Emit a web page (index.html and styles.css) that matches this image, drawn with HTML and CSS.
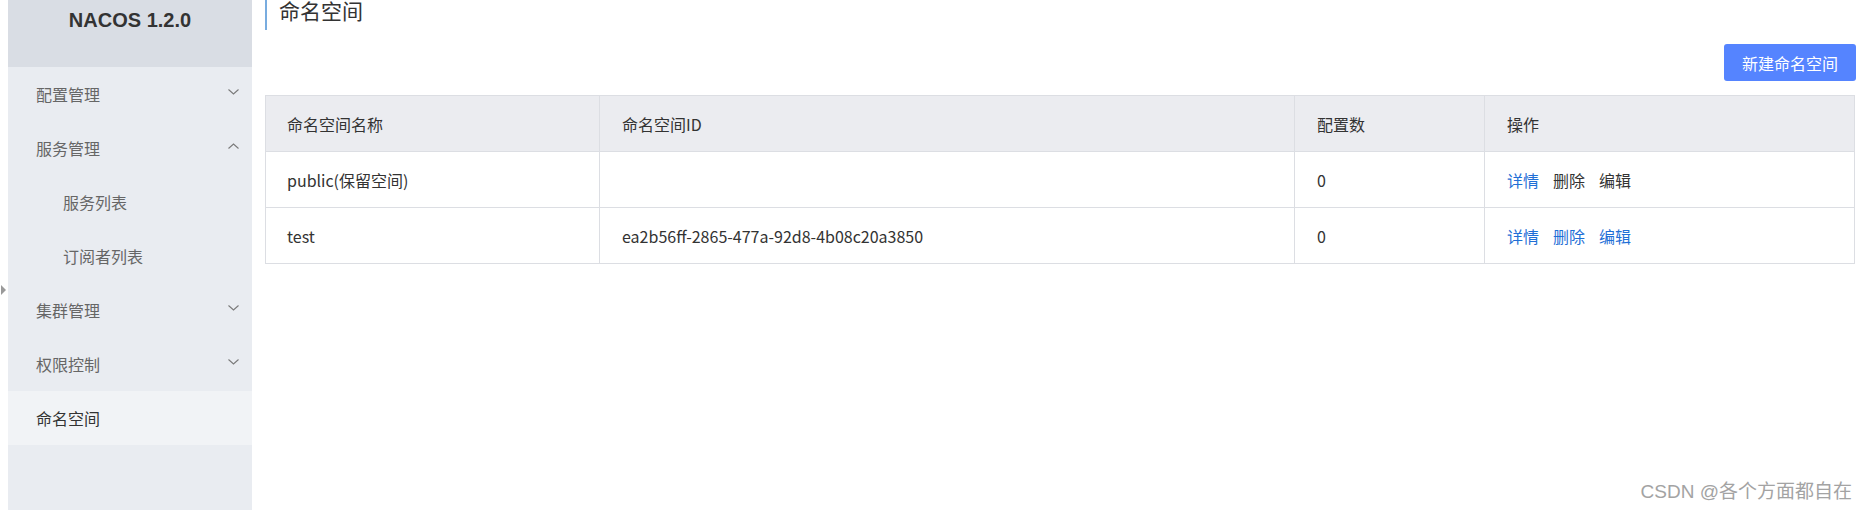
FILE: index.html
```html
<!DOCTYPE html>
<html lang="zh-CN">
<head>
<meta charset="utf-8">
<title>Nacos 命名空间</title>
<link rel="stylesheet" href="styles.css">
</head>
<body>
<div class="toggle"></div>
<div class="layout">
  <aside class="sidebar">
    <div class="brand">NACOS 1.2.0</div>
    <ul class="menu">
      <li class="item"><span>配置管理</span><svg class="chev" width="11" height="6" viewBox="0 0 11 6"><polyline points="0.5,0.5 5.5,5 10.5,0.5"/></svg></li>
      <li class="item"><span>服务管理</span><svg class="chev" width="11" height="6" viewBox="0 0 11 6"><polyline points="0.5,5.5 5.5,1 10.5,5.5"/></svg></li>
      <li class="item sub"><span>服务列表</span></li>
      <li class="item sub"><span>订阅者列表</span></li>
      <li class="item"><span>集群管理</span><svg class="chev" width="11" height="6" viewBox="0 0 11 6"><polyline points="0.5,0.5 5.5,5 10.5,0.5"/></svg></li>
      <li class="item"><span>权限控制</span><svg class="chev" width="11" height="6" viewBox="0 0 11 6"><polyline points="0.5,0.5 5.5,5 10.5,0.5"/></svg></li>
      <li class="item active"><span>命名空间</span></li>
    </ul>
  </aside>
  <main class="main">
    <h1 class="title">命名空间</h1>
    <div class="toolbar"><button class="btn">新建命名空间</button></div>
    <table class="grid">
      <colgroup>
        <col class="c1"><col class="c2"><col class="c3"><col class="c4">
      </colgroup>
      <thead>
        <tr><th class="first">命名空间名称</th><th>命名空间ID</th><th>配置数</th><th>操作</th></tr>
      </thead>
      <tbody>
        <tr>
          <td class="first">public(保留空间)</td><td></td><td>0</td>
          <td><span class="ops"><a class="link">详情</a><a class="plain">删除</a><a class="plain">编辑</a></span></td>
        </tr>
        <tr>
          <td class="first">test</td><td>ea2b56ff-2865-477a-92d8-4b08c20a3850</td><td>0</td>
          <td><span class="ops"><a class="link">详情</a><a class="link">删除</a><a class="link">编辑</a></span></td>
        </tr>
      </tbody>
    </table>
  </main>
</div>
<div class="watermark">CSDN @各个方面都自在</div>
</body>
</html>
```

FILE: styles.css
```css
* { box-sizing: border-box; }
html, body { margin: 0; padding: 0; background: #fff; }
body {
  font-family: "Noto Sans CJK SC", "Liberation Sans", sans-serif;
  color: #333;
  height: 510px;
  overflow: hidden;
  position: relative;
}
.layout {
  display: flex;
  height: 510px;
  padding-left: 8px;
}
.sidebar {
  width: 244px;
  flex: none;
  background: #e9ecf1;
  height: 100%;
}
.brand {
  height: 67px;
  background: #d9dde4;
  text-align: center;
  font-family: "Liberation Sans", Arial, sans-serif;
  font-weight: bold;
  font-size: 20px;
  line-height: 40px;
  color: #333;
}
.menu { list-style: none; margin: 0; padding: 0; }
.item {
  height: 54px;
  display: flex;
  align-items: center;
  justify-content: space-between;
  padding: 0 13px 0 28px;
  font-size: 16px;
  color: #666;
}
.item.sub { padding-left: 55px; }
.item.active { background: #f1f3f6; color: #333; }
.chev { margin-top: -4px; }
.chev polyline { fill: none; stroke: #7a7a7a; stroke-width: 1.1; }
.main {
  flex: 1;
  padding: 0 12px 0 13px;
}
.title {
  margin: 0;
  height: 30px;
  border-left: 2px solid #78acdf;
  padding-left: 12px;
  font-size: 21px;
  font-weight: normal;
  line-height: 20px;
  color: #333;
}
.toolbar {
  display: flex;
  justify-content: flex-end;
  margin-top: 14px;
}
.btn {
  width: 132px;
  height: 37px;
  margin-right: -1px;
  border: none;
  border-radius: 3px;
  background: #5584ff;
  color: #fff;
  font-family: inherit;
  font-size: 16px;
  padding: 0;
}
.grid {
  margin-top: 14px;
  width: 100%;
  border-collapse: collapse;
  table-layout: fixed;
  font-size: 16px;
  border: 1px solid #dcdee3;
}
.c1 { width: 334px; }
.c2 { width: 695px; }
.c3 { width: 190px; }
.grid th, .grid td {
  height: 56px;
  border: 1px solid #dcdee3;
  padding: 0 20px 0 22px;
  text-align: left;
  font-weight: normal;
  color: #333;
  white-space: nowrap;
}
.grid th { background: #ebecf0; }
.grid .first { padding-left: 21px; }
.ops { display: inline-flex; gap: 14px; }
.link { color: #1f6fd6; }
.plain { color: #333; }
.toggle {
  position: absolute;
  left: 1px;
  top: 285px;
  width: 0;
  height: 0;
  border-top: 5px solid transparent;
  border-bottom: 5px solid transparent;
  border-left: 5px solid #9a9a9a;
}
.watermark {
  position: absolute;
  right: 15px;
  top: 480px;
  font-family: "Liberation Sans", "Noto Sans CJK SC", sans-serif;
  font-size: 19px;
  line-height: 24px;
  color: #a3a3a3;
}
```
